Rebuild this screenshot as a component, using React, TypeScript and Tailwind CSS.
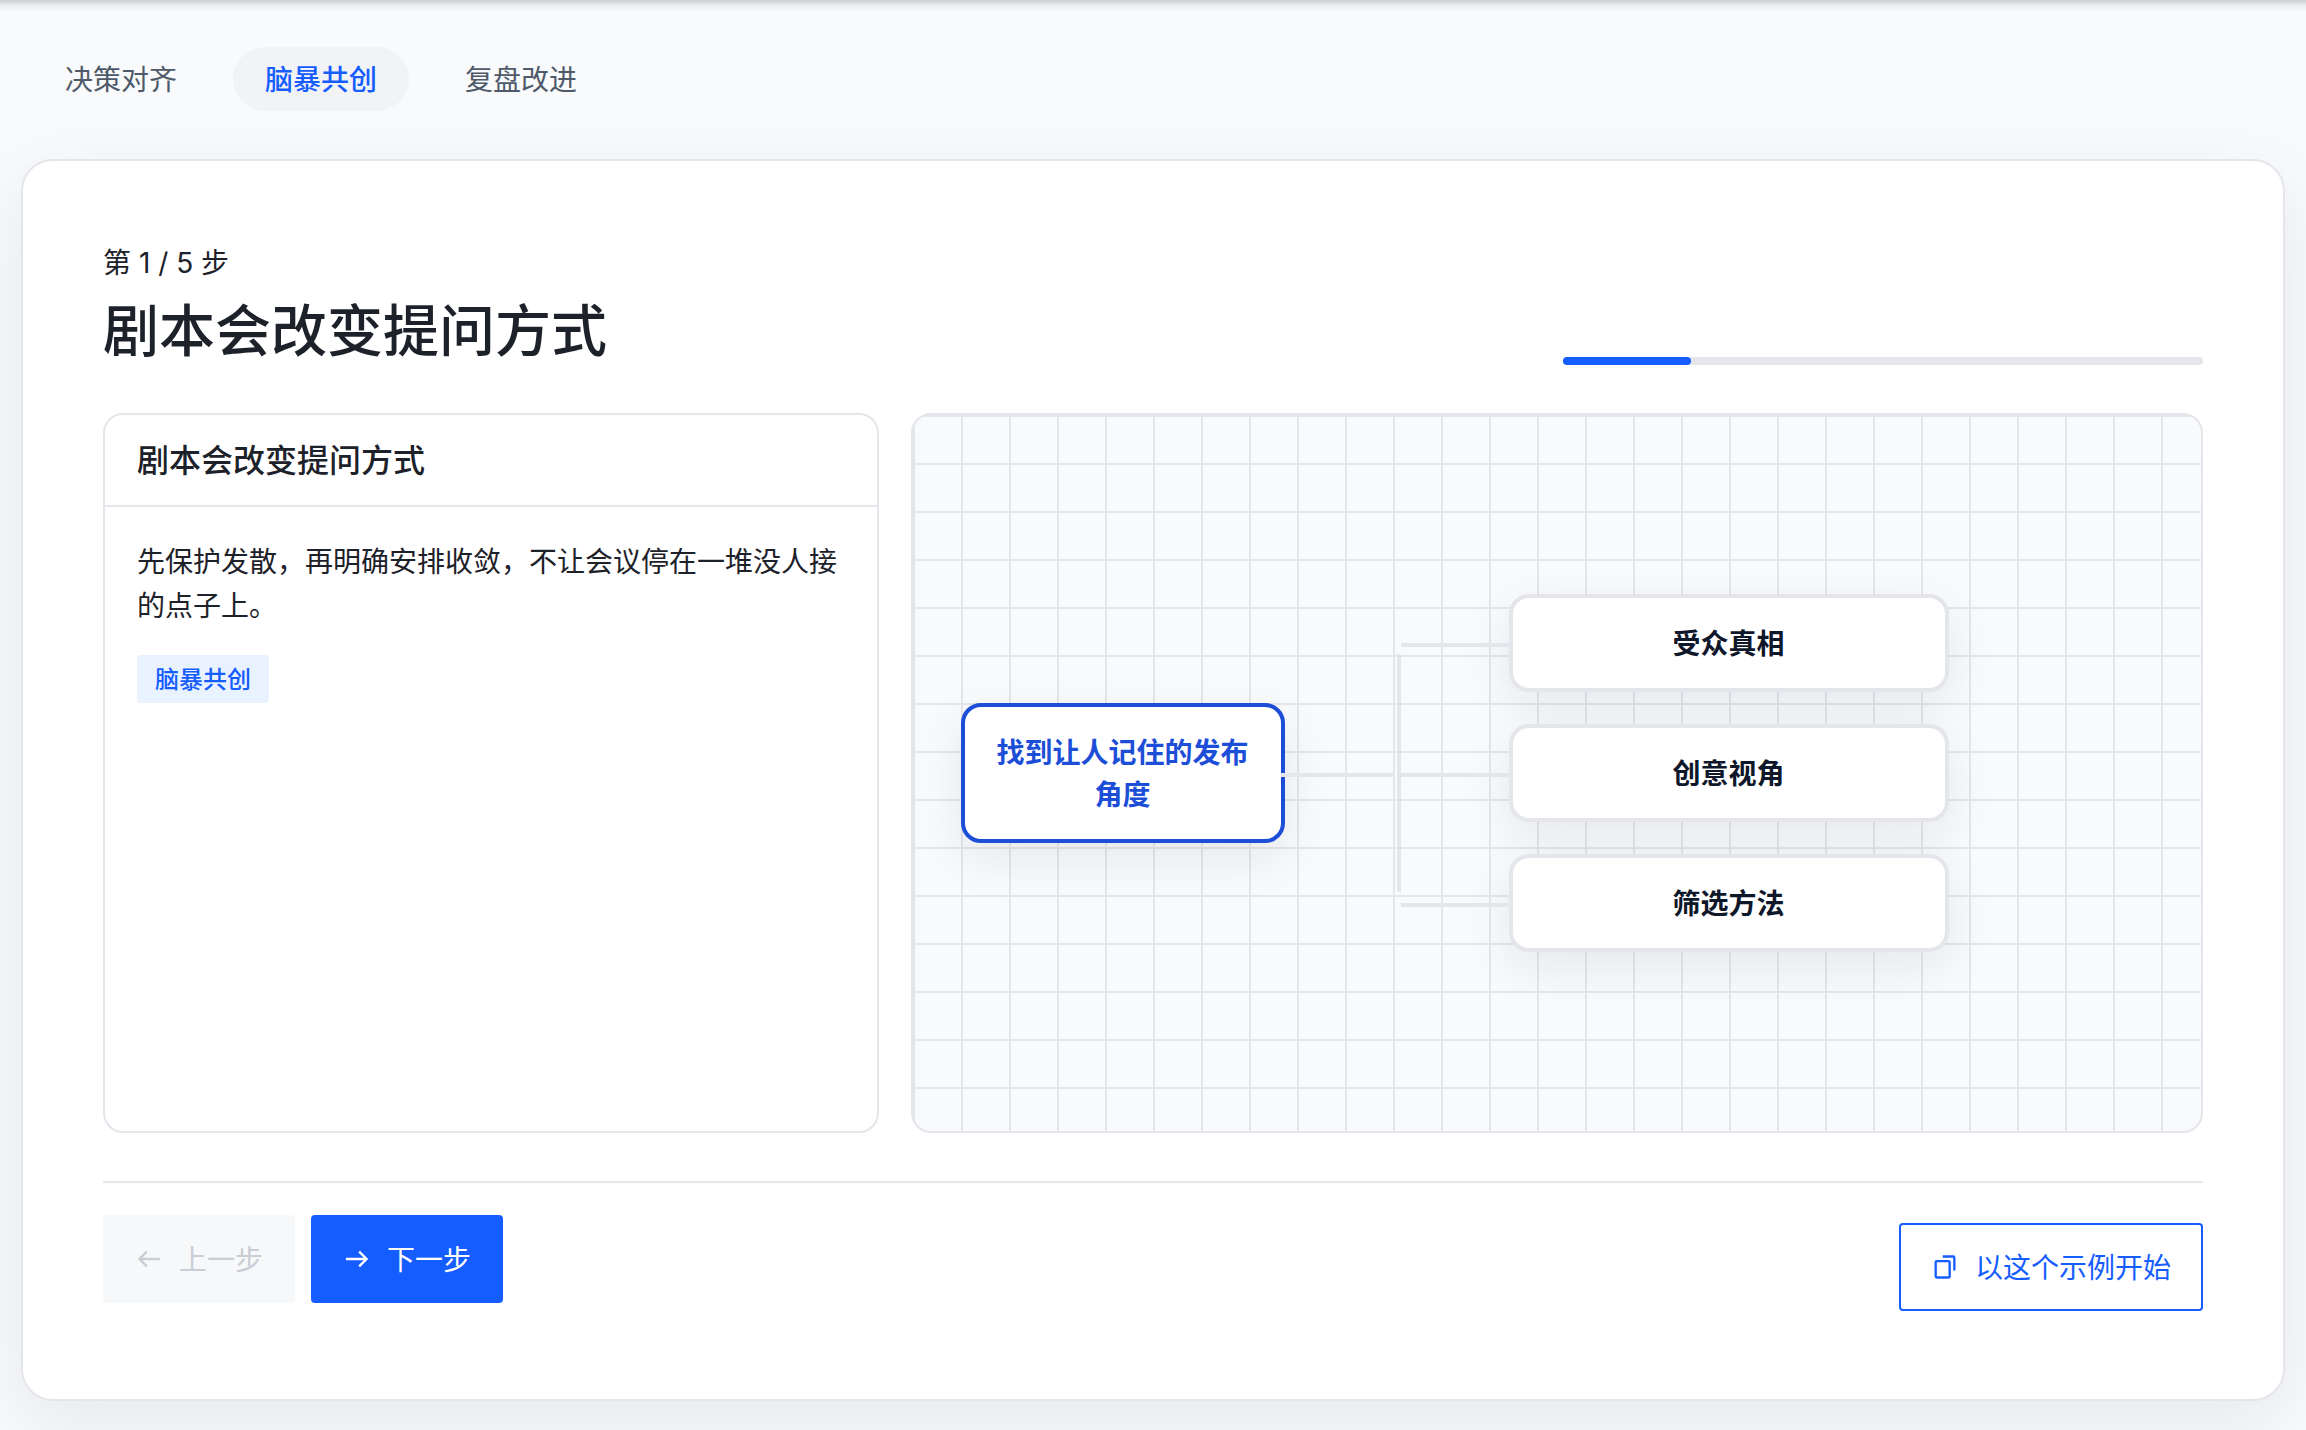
import { useState } from 'react';
import type { ReactNode } from 'react';

const scenarios = ['决策对齐', '脑暴共创', '复盘改进'];
const branches = ['受众真相', '创意视角', '筛选方法'];
const totalSteps = 5;

function Icon({ children }: { children: ReactNode }) {
  return (
    <svg
      viewBox="0 0 48 48"
      className="size-7 shrink-0"
      fill="none"
      stroke="currentColor"
      strokeWidth="4"
      aria-hidden="true"
    >
      {children}
    </svg>
  );
}

function ScenarioTabs({ active, onChange }: { active: string; onChange: (name: string) => void }) {
  return (
    <div role="tablist" className="flex gap-6 px-3">
      {scenarios.map((name) => (
        <button
          key={name}
          type="button"
          role="tab"
          aria-selected={name === active}
          onClick={() => onChange(name)}
          className={
            name === active
              ? 'h-16 rounded-full bg-[#f2f3f5] px-8 font-medium text-[#165dff]'
              : 'h-16 rounded-full px-8 text-[#4e5969]'
          }
        >
          {name}
        </button>
      ))}
    </div>
  );
}

function StepCard({ title, tag, children }: { title: string; tag: string; children: ReactNode }) {
  return (
    <section className="rounded-[20px] border-2 border-[#e5e6eb] bg-white">
      <h3 className="border-b-2 border-[#e5e6eb] px-8 py-5 text-[32px] leading-[50px] font-medium">{title}</h3>
      <div className="flex flex-col items-start gap-7 p-8">
        <p>{children}</p>
        <span className="rounded-sm bg-[#e8f3ff] px-[18px] text-2xl leading-[48px] font-medium text-[#165dff]">
          {tag}
        </span>
      </div>
    </section>
  );
}

function MindMap({ topic }: { topic: string }) {
  return (
    <div className="flex items-center gap-28 overflow-hidden rounded-[20px] border-2 border-[#e5e6eb] bg-[#f9fafc] bg-[linear-gradient(#e5e6eb_2px,transparent_2px),linear-gradient(90deg,#e5e6eb_2px,transparent_2px)] bg-size-[48px_48px] p-12 text-center leading-[42px] font-semibold">
      <div className="relative w-[324px] rounded-[20px] border-4 border-[#1d4ed8] bg-white px-8 py-6 text-[#1d4ed8] shadow-[0_16px_48px_rgba(15,23,42,0.08)]">
        {topic}
        <span className="absolute top-1/2 left-full h-1 w-28 bg-[#e5e6eb]" />
      </div>
      <div className="relative flex flex-col gap-8 pl-28">
        <span className="absolute inset-y-[60px] left-0 w-1 bg-[#e5e6eb]" />
        {branches.map((branch) => (
          <div
            key={branch}
            className="relative w-[440px] rounded-[20px] border-4 border-[#e5e6eb] bg-white px-8 py-6 text-[#0f172a] shadow-[0_16px_48px_rgba(15,23,42,0.08)]"
          >
            <span className="absolute top-1/2 right-full h-1 w-28 bg-[#e5e6eb]" />
            {branch}
          </div>
        ))}
      </div>
    </div>
  );
}

export default function App() {
  const [scenario, setScenario] = useState('脑暴共创');
  const [step, setStep] = useState(1);

  return (
    <div className="min-h-screen bg-[#f9fafc] font-['Noto_Sans','Noto_Sans_CJK_SC',sans-serif] text-[28px] leading-[44px] text-[#1d2129]">
      <div className="h-3 bg-linear-to-b from-[#cdced2] via-[#eeeff1] to-[#f9fafc]" />
      <main className="flex flex-col gap-12 px-[21px] pt-[35px] pb-7">
        <ScenarioTabs active={scenario} onChange={setScenario} />

        <div className="rounded-[32px] border-2 border-[#e5e6eb] bg-white p-20 shadow-[0_24px_72px_rgba(15,23,42,0.08)]">
          <header className="flex items-end justify-between">
            <div className="flex flex-col gap-2">
              <p className="font-[Inter,'Noto_Sans_CJK_SC',sans-serif]">
                第 {step} / {totalSteps} 步
              </p>
              <h2 className="text-[56px] leading-[72px] font-medium">剧本会改变提问方式</h2>
            </div>
            <div
              role="progressbar"
              aria-label="进度"
              aria-valuenow={step}
              aria-valuemax={totalSteps}
              className="h-2 w-[640px] rounded-full bg-[#e5e6eb]"
            >
              <div className="h-2 rounded-full bg-[#165dff]" style={{ width: `${(step / totalSteps) * 100}%` }} />
            </div>
          </header>

          <div className="mt-12 grid min-h-[720px] grid-cols-[3fr_5fr] gap-8">
            <StepCard title="剧本会改变提问方式" tag={scenario}>
              先保护发散，再明确安排收敛，不让会议停在一堆没人接的点子上。
            </StepCard>
            <MindMap topic="找到让人记住的发布角度" />
          </div>

          <footer className="mt-12 flex items-center justify-between border-t-2 border-[#e5e6eb] pt-8">
            <div className="flex gap-4 pb-4">
              <button
                type="button"
                disabled={step === 1}
                onClick={() => setStep(step - 1)}
                className="flex h-[88px] items-center gap-4 rounded-sm bg-[#165dff] px-8 text-white disabled:bg-[#f7f8fa] disabled:text-[#c9cdd4]"
              >
                <Icon>
                  <path d="M20.272 11.27 7.544 23.998l12.728 12.728M43 24H8.705" />
                </Icon>
                上一步
              </button>
              <button
                type="button"
                disabled={step === totalSteps}
                onClick={() => setStep(step + 1)}
                className="flex h-[88px] items-center gap-4 rounded-sm bg-[#165dff] px-8 text-white disabled:bg-[#f7f8fa] disabled:text-[#c9cdd4]"
              >
                <Icon>
                  <path d="m27.728 11.27 12.728 12.728-12.728 12.728M5 24h34.295" />
                </Icon>
                下一步
              </button>
            </div>
            <button
              type="button"
              className="flex h-[88px] items-center gap-4 rounded-sm border-2 border-[#165dff] px-[30px] text-[#165dff]"
            >
              <Icon>
                <path d="M20 6h18a2 2 0 0 1 2 2v22M8 16v24c0 1.105.891 2 1.996 2h20.007A1.99 1.99 0 0 0 32 40.008V15.997A1.997 1.997 0 0 0 30 14H10a2 2 0 0 0-2 2Z" />
              </Icon>
              以这个示例开始
            </button>
          </footer>
        </div>
      </main>
    </div>
  );
}
